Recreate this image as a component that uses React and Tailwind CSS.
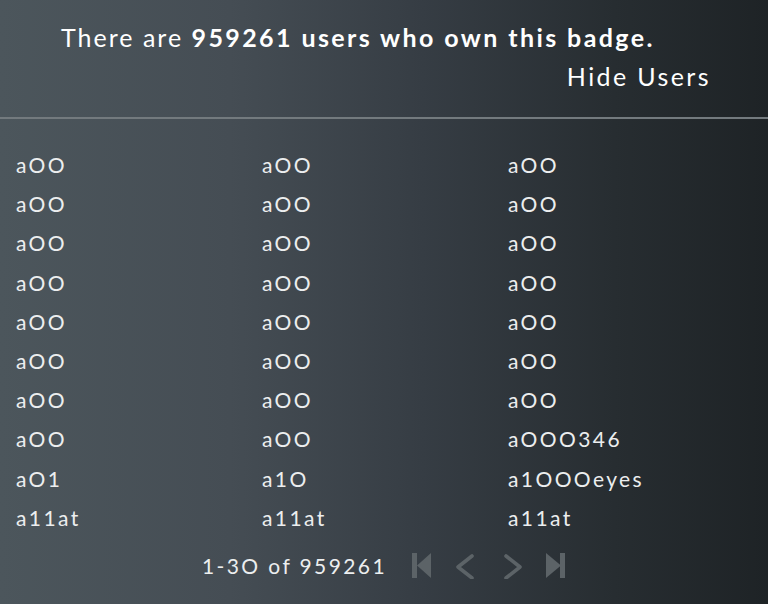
import React from "react";

const names = [
  ["aOO", "aOO", "aOO"],
  ["aOO", "aOO", "aOO"],
  ["aOO", "aOO", "aOO"],
  ["aOO", "aOO", "aOO"],
  ["aOO", "aOO", "aOO"],
  ["aOO", "aOO", "aOO"],
  ["aOO", "aOO", "aOO"],
  ["aOO", "aOO", "aOOO346"],
  ["aO1", "a1O", "a1OOOeyes"],
  ["a11at", "a11at", "a11at"],
];

const FirstIcon = () => (
  <svg width="22" height="26" viewBox="0 0 22 26" fill="#5c6367">
    <rect x="1" y="0" width="5" height="25" />
    <polygon points="6,12.5 20,0 20,25" />
  </svg>
);

const LastIcon = () => (
  <svg width="22" height="26" viewBox="0 0 22 26" fill="#5c6367">
    <polygon points="2,0 17,12.5 2,25" />
    <rect x="16" y="0" width="5" height="25" />
  </svg>
);

const PrevIcon = () => (
  <svg width="20" height="26" viewBox="0 0 20 26" fill="none" stroke="#5c6367" strokeWidth="3.6" strokeLinecap="round" strokeLinejoin="round">
    <polyline points="17,3 3,14 17,25" />
  </svg>
);

const NextIcon = () => (
  <svg width="20" height="26" viewBox="0 0 20 26" fill="none" stroke="#5c6367" strokeWidth="3.6" strokeLinecap="round" strokeLinejoin="round">
    <polyline points="3,3 17,14 3,25" />
  </svg>
);

export default function App() {
  return (
    <div
      className="w-[768px] h-[604px] overflow-hidden text-white bg-[linear-gradient(90deg,#4c565c_0%,#454d54_30%,#363d44_55%,#272d31_80%,#1e2326_100%)]"
      style={{ fontFamily: "Lato, 'Open Sans', sans-serif" }}
    >
      {/* Header */}
      <div className="pl-[61px] pr-[59px] pt-[20px] h-[117px]">
        <p className="text-[25px] leading-[34px] tracking-[2px] whitespace-nowrap text-white">
          There are <span className="font-bold tracking-[2.4px]">959261 users who own this badge.</span>
        </p>
        <div className="flex justify-end mt-[5px]">
          <button className="text-[25px] leading-[34px] tracking-[2.4px] -mr-[2px] text-white">Hide Users</button>
        </div>
      </div>
      <div className="h-[2px] bg-[#737a7e]" />

      {/* User grid */}
      <div className="grid grid-cols-[246px_246px_246px] pl-[16px] pt-[26px]">
        {names.flat().map((n, i) => (
          <div key={i} className="h-[39.2px] leading-[39px] text-[21px] tracking-[2.4px] whitespace-nowrap text-[#eceeef]">
            {n}
          </div>
        ))}
      </div>

      {/* Pagination */}
      <div className="flex items-center justify-center mt-[11px] h-[36px]">
        <span className="text-[21px] tracking-[2.4px] text-[#eceeef] mr-[24px]">1-3O of 959261</span>
        <div className="flex items-center">
          <FirstIcon />
          <span className="ml-[22px]"><PrevIcon /></span>
          <span className="ml-[28px]"><NextIcon /></span>
          <span className="ml-[21px]"><LastIcon /></span>
        </div>
      </div>
    </div>
  );
}
